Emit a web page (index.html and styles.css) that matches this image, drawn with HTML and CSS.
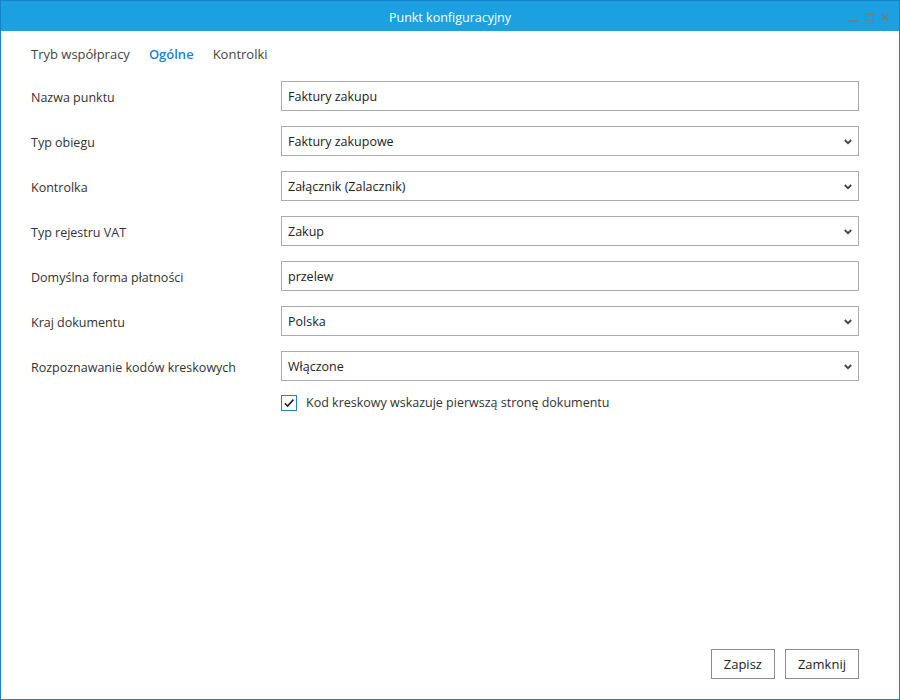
FILE: index.html
```html
<!DOCTYPE html>
<html lang="pl">
<head>
<meta charset="utf-8">
<title>Punkt konfiguracyjny</title>
<link rel="stylesheet" href="styles.css">
</head>
<body>
<div class="window">
  <div class="titlebar">
    <span class="title">Punkt konfiguracyjny</span>
    <div class="controls">
      <span class="ctl-min"></span>
      <span class="ctl-max"></span>
      <svg class="ctl-close" width="8" height="8" viewBox="0 0 8 8"><path d="M0.5 0.5 L7.5 7.5 M7.5 0.5 L0.5 7.5" stroke="#7a7a7a" stroke-width="1.6" fill="none"/></svg>
    </div>
  </div>
  <div class="content">
    <nav class="tabs">
      <span class="tab">Tryb współpracy</span>
      <span class="tab active">Ogólne</span>
      <span class="tab">Kontrolki</span>
    </nav>
    <div class="form">
      <label class="label">Nazwa punktu</label>
      <div class="field">Faktury zakupu</div>

      <label class="label">Typ obiegu</label>
      <div class="field select">Faktury zakupowe<svg class="chev" width="8" height="6" viewBox="0 0 8 6"><path d="M0.8 1 L4 4.2 L7.2 1" stroke="#444" stroke-width="1.8" fill="none"/></svg></div>

      <label class="label">Kontrolka</label>
      <div class="field select">Załącznik (Zalacznik)<svg class="chev" width="8" height="6" viewBox="0 0 8 6"><path d="M0.8 1 L4 4.2 L7.2 1" stroke="#444" stroke-width="1.8" fill="none"/></svg></div>

      <label class="label">Typ rejestru VAT</label>
      <div class="field select">Zakup<svg class="chev" width="8" height="6" viewBox="0 0 8 6"><path d="M0.8 1 L4 4.2 L7.2 1" stroke="#444" stroke-width="1.8" fill="none"/></svg></div>

      <label class="label">Domyślna forma płatności</label>
      <div class="field">przelew</div>

      <label class="label">Kraj dokumentu</label>
      <div class="field select">Polska<svg class="chev" width="8" height="6" viewBox="0 0 8 6"><path d="M0.8 1 L4 4.2 L7.2 1" stroke="#444" stroke-width="1.8" fill="none"/></svg></div>

      <label class="label">Rozpoznawanie kodów kreskowych</label>
      <div class="field select">Włączone<svg class="chev" width="8" height="6" viewBox="0 0 8 6"><path d="M0.8 1 L4 4.2 L7.2 1" stroke="#444" stroke-width="1.8" fill="none"/></svg></div>

      <span></span>
      <div class="check-row">
        <span class="checkbox"><svg width="12" height="12" viewBox="0 0 12 12"><path d="M1.8 6.2 L4.6 9 L10.4 2.6" stroke="#222" stroke-width="1.6" fill="none"/></svg></span>
        <span class="check-label">Kod kreskowy wskazuje pierwszą stronę dokumentu</span>
      </div>
    </div>
    <div class="footer">
      <button class="btn">Zapisz</button>
      <button class="btn">Zamknij</button>
    </div>
  </div>
</div>
</body>
</html>
```
FILE: styles.css
```css
* { box-sizing: border-box; }
html, body { margin: 0; padding: 0; background: #ffffff; }
body {
  font-family: "Open Sans", "Noto Sans", "DejaVu Sans", sans-serif;
  font-size: 12.5px;
  color: #333333;
}
.window {
  width: 900px;
  height: 700px;
  border: 1px solid #1781cf;
  display: flex;
  flex-direction: column;
  background: #ffffff;
}
.titlebar {
  height: 30px;
  background: #1ba1e2;
  color: #ffffff;
  display: flex;
  align-items: center;
  justify-content: center;
  position: relative;
  flex: none;
}
.title {
  font-size: 12.5px;
  margin-top: 2px;
}
.controls {
  position: absolute;
  right: 10px;
  top: 12px;
  display: flex;
  align-items: flex-start;
  gap: 7px;
}
.ctl-min {
  width: 9px;
  height: 2px;
  background: #7a7a7a;
  margin-top: 7px;
}
.ctl-max {
  width: 9px;
  height: 8px;
  border: 1px solid #7a7a7a;
  border-top-width: 2px;
}
.ctl-close { display: block; margin-top: 0; }
.content {
  flex: 1;
  display: flex;
  flex-direction: column;
  padding: 0 40px 20px 30px;
}
.tabs {
  display: flex;
  gap: 19px;
  height: 50px;
  align-items: center;
  padding-bottom: 4px;
  font-size: 13px;
  color: #444444;
}
.tab.active {
  color: #1a84d0;
  font-weight: 600;
}
.form {
  display: grid;
  grid-template-columns: 250px 1fr;
  row-gap: 15px;
  align-items: center;
}
.label {
  color: #333333;
  padding-top: 2px;
}
.field {
  height: 30px;
  border: 1px solid #ababab;
  padding: 0 6px;
  display: flex;
  align-items: center;
  color: #222222;
  position: relative;
}
.chev {
  position: absolute;
  right: 6px;
  top: 12px;
}
.check-row {
  display: flex;
  align-items: center;
  gap: 9px;
  margin-top: -2px;
}
.checkbox {
  width: 16px;
  height: 16px;
  border: 1px solid #1a84d0;
  display: flex;
  align-items: center;
  justify-content: center;
  background: #fff;
}
.checkbox svg { display: block; }
.check-label { color: #333333; }
.footer {
  margin-top: auto;
  display: flex;
  justify-content: flex-end;
  gap: 10px;
}
.btn {
  height: 30px;
  padding: 0 12px;
  border: 1px solid #8c8c8c;
  background: #ffffff;
  font-family: inherit;
  font-size: 13px;
  color: #222222;
}
```
